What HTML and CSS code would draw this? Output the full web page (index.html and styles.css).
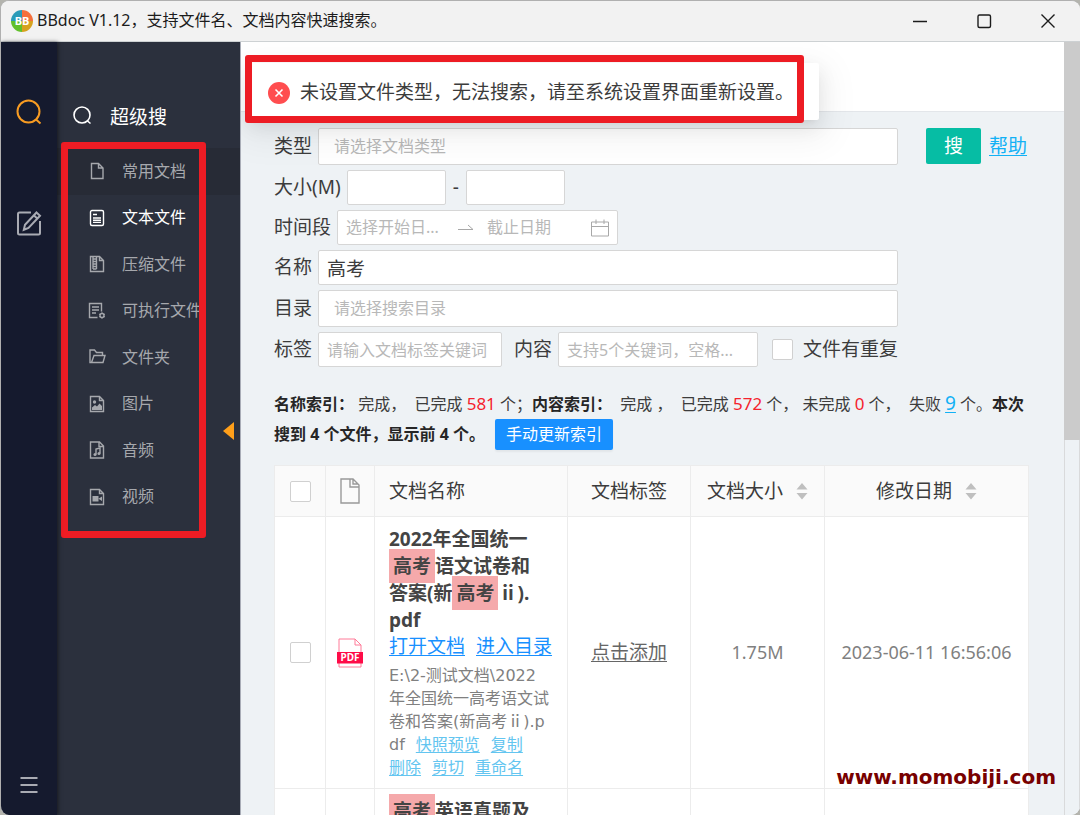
FILE: index.html
```html
<!DOCTYPE html>
<html lang="zh-CN">
<head>
<meta charset="utf-8">
<meta name="viewport" content="width=device-width, initial-scale=1">
<title>BBdoc V1.12</title>
<link rel="stylesheet" href="styles.css">
</head>
<body>
<div class="window">
  <header class="titlebar">
    <svg class="logo" viewBox="0 0 22 22" aria-hidden="true">
      <path d="M11 11V0A11 11 0 0 0 0 11z" fill="#2a9bb8"/>
      <path d="M11 11h11A11 11 0 0 0 11 0z" fill="#f56f3c"/>
      <path d="M11 11v11a11 11 0 0 0 11-11z" fill="#d6a21e"/>
      <path d="M11 11H0a11 11 0 0 0 11 11z" fill="#62c02c"/>
      <text class="logo-text" x="11" y="15" text-anchor="middle">BB</text>
    </svg>
    <h1 class="title">BBdoc V1.12，支持文件名、文档内容快速搜索。</h1>
    <div class="win-controls">
      <button class="win-btn" aria-label="最小化"><svg viewBox="0 0 16 16"><path d="M1 8.500h14"/></svg></button>
      <button class="win-btn" aria-label="最大化"><svg viewBox="0 0 16 16"><rect x="2" y="2" width="12.500" height="12.500" rx="1.500"/></svg></button>
      <button class="win-btn" aria-label="关闭"><svg viewBox="0 0 16 16"><path d="M1.500 1.500l13 13M14.500 1.500l-13 13"/></svg></button>
    </div>
  </header>

  <div class="app">
    <nav class="rail" aria-label="主导航">
      <button class="rail-btn rail-active" aria-label="搜索"><svg viewBox="0 0 26 26"><circle cx="12.500" cy="12.500" r="11"/><path d="M20 20.500l4.500 4"/></svg></button>
      <button class="rail-btn" aria-label="编辑"><svg viewBox="0 0 26 26"><path d="M15 2.500H3.500q-1.500 0-1.500 1.500v19q0 1.500 1.500 1.500h19q1.500 0 1.500-1.500V11"/><path d="M20.500 2.500l3.500 3.200L12.500 18l-4.700 1.800L9 14.800zM18 5.500l3.300 3"/></svg></button>
      <button class="rail-btn rail-menu" aria-label="菜单"><svg viewBox="0 0 26 26"><path d="M4.500 6h17M4.500 13h17M4.500 20h17"/></svg></button>
    </nav>

    <aside class="side">
      <div class="side-head">
        <svg viewBox="0 0 20 20" aria-hidden="true"><circle cx="10" cy="9" r="8"/><path d="M15.500 15l3 2.500"/></svg>
        <h2 class="side-title">超级搜</h2>
      </div>
      <ul class="menu">
        <li class="menu-item menu-hover"><svg viewBox="0 0 18 18"><path d="M3.500 1.500h7l4.500 4.500v10.500h-11.500zM10.500 1.500V6H15"/></svg>常用文档</li>
        <li class="menu-item menu-current"><svg viewBox="0 0 18 18"><rect x="2.500" y="1.500" width="13" height="15" rx="1.500"/><path d="M5 5.500h4M5 9h8M5 11.200h8M5 13.400h8"/></svg>文本文件</li>
        <li class="menu-item"><svg viewBox="0 0 18 18"><path d="M2.500 1.500h9l4 4v11h-13zM11.500 1.500v4h4"/><path d="M5 2v12M8.500 2v12M5 4h3.500M5 6.500h3.500M5 9h3.500M5 11.500h3.500M5 14h3.500"/></svg>压缩文件</li>
        <li class="menu-item"><svg viewBox="0 0 18 18"><path d="M9.500 15.500h-8v-14h12v8M4 5h7M4 8h7M4 11h4"/><circle cx="14" cy="13.500" r="2"/><path d="M14 10.500v1M14 15.500v1M11.300 12l.9.500M15.800 14.500l.9.500M11.300 15l.9-.5M15.800 12.500l.9-.5"/></svg>可执行文件</li>
        <li class="menu-item"><svg viewBox="0 0 18 18"><path d="M3.500 14.500h-1.500v-12.500h4.500l2 2.500h6v3M3.500 14.500l2.500-7h11l-2 7z"/></svg>文件夹</li>
        <li class="menu-item"><svg viewBox="0 0 18 18"><path d="M2.500 1.500h9l4 4v11h-13zM11.500 1.500v4h4"/><circle class="solid" cx="6.500" cy="7" r="1.700"/><path class="solid" d="M4 15v-2.500l3-2.500 2 1.500 2.500-3 2.500 2.500v4z"/></svg>图片</li>
        <li class="menu-item"><svg viewBox="0 0 18 18"><path d="M2.500 1h9l4 4v12h-13zM11 1v4.500h4.500"/><path d="M8 13.500v-5.500l4-1v5.500"/><circle class="solid" cx="7" cy="13.500" r="1.500"/><circle class="solid" cx="11" cy="12.500" r="1.500"/></svg>音频</li>
        <li class="menu-item"><svg viewBox="0 0 18 18"><path d="M2.500 1.500h9l4 4v11h-13zM11.500 1.500v4h4"/><path class="solid" d="M4.500 8h6v5.500h-6zM10.500 10.700l3.500-2.200v4.500z"/></svg>视频</li>
      </ul>
      <button class="collapse" aria-label="收起侧栏"></button>
      <div class="mark mark-menu"></div>
    </aside>

    <main class="main">
      <div class="topband"></div>
      <section class="content">
        <form class="search">
          <div class="fields">
            <div class="row">
              <label for="type">类型</label>
              <select id="type" class="box tall grow"><option>请选择文档类型</option></select>
            </div>
            <div class="row">
              <label for="min">大小(M)</label>
              <div class="range"><input id="min" class="box size"><span>-</span><input class="box size" aria-label="最大大小"></div>
            </div>
            <div class="row">
              <label for="start">时间段</label>
              <div class="box dates">
                <input id="start" class="bare" placeholder="选择开始日...">
                <svg class="arrow" viewBox="0 0 18 16"><path d="M1 9.500h15l-5-4.500"/></svg>
                <input class="bare" placeholder="截止日期" aria-label="截止日期">
                <svg class="calendar" viewBox="0 0 20 20"><path d="M1.500 4h17v14h-17zM1.500 8.500h17M6 1.500v4.500M14 1.500v4.500"/></svg>
              </div>
            </div>
            <div class="row">
              <label for="name">名称</label>
              <input id="name" class="box grow typed" value="高考">
            </div>
            <div class="row">
              <label for="dir">目录</label>
              <select id="dir" class="box tall grow"><option>请选择搜索目录</option></select>
            </div>
            <div class="row">
              <label for="tag">标签</label>
              <input id="tag" class="box tag" placeholder="请输入文档标签关键词">
              <label for="text" class="label-next">内容</label>
              <input id="text" class="box grow" placeholder="支持5个关键词，空格...">
              <input id="dup" class="check dup" type="checkbox">
              <label for="dup" class="label-dup">文件有重复</label>
            </div>
          </div>
          <div class="actions">
            <button type="button" class="go">搜</button>
            <a class="help" href="#">帮助</a>
          </div>
        </form>

        <div class="status">
          <b>名称索引：</b>&nbsp;完成，&nbsp; 已完成 <span class="num">581</span> 个；<b>内容索引：</b>&nbsp; 完成 ，&nbsp; 已完成 <span class="num">572</span> 个，&nbsp;未完成 <span class="num">0</span> 个，&nbsp; 失败 <a class="failed" href="#">9</a> 个。<b>本次<br>搜到 4 个文件，显示前 4 个。</b>
          <button type="button" class="update">手动更新索引</button>
        </div>

        <table class="results">
          <colgroup><col class="c-check"><col class="c-icon"><col class="c-name"><col class="c-tag"><col class="c-size"><col></colgroup>
          <thead>
            <tr>
              <th><input class="check" type="checkbox" aria-label="全选"></th>
              <th><svg class="doc" viewBox="0 0 20 26"><path d="M1 1h12l6 6v18H1zM10 1v8h9M13 1v5h5"/></svg></th>
              <th class="left">文档名称</th>
              <th>文档标签</th>
              <th><span class="sortable">文档大小<svg class="sort" viewBox="0 0 12 18"><path d="M6 1l5.500 6.500H.5zM6 17.500L.5 11h11z"/></svg></span></th>
              <th><span class="sortable">修改日期<svg class="sort" viewBox="0 0 12 18"><path d="M6 1l5.500 6.500H.5zM6 17.500L.5 11h11z"/></svg></span></th>
            </tr>
          </thead>
          <tbody>
            <tr>
              <td><input class="check" type="checkbox" aria-label="选择文档"></td>
              <td><svg class="pdf" viewBox="0 0 26 30"><path class="pdf-page" d="M2 14V1h16l6 6v7M18 1v6h6M2 25v4h22v-4"/><path d="M0 14h26v11.500H0z" fill="#ff0b47"/><text class="pdf-text" x="13" y="23" text-anchor="middle">PDF</text></svg></td>
              <td class="left">
                <div class="doc-title">2022年全国统一<br><mark class="hit">高考</mark>语文试卷和<br>答案(新<mark class="hit">高考</mark>ⅱ).<br>pdf</div>
                <div class="open"><a href="#">打开文档</a><a href="#">进入目录</a></div>
                <div class="path">E:\2-测试文档\2022年全国统一高考语文试卷和答案(新高考<span class="wide">ⅱ</span>).pdf<a href="#">快照预览</a><a href="#">复制</a><br><a class="first" href="#">删除</a><a href="#">剪切</a><a href="#">重命名</a></div>
              </td>
              <td><a class="add" href="#">点击添加</a></td>
              <td>1.75M</td>
              <td>2023-06-11 16:56:06</td>
            </tr>
            <tr class="tall-row">
              <td><input class="check" type="checkbox" aria-label="选择文档"></td>
              <td></td>
              <td class="left top"><div class="doc-title"><mark class="hit">高考</mark>英语真题及</div></td>
              <td></td><td></td><td></td>
            </tr>
          </tbody>
        </table>
      </section>

      <div class="toast" role="alert">
        <svg viewBox="0 0 22 22" aria-hidden="true"><circle cx="11" cy="11" r="11" fill="#ff4d4f"/><path d="M7.500 7.500l7 7M14.500 7.500l-7 7" stroke="#fff" stroke-width="1.600"/></svg>
        未设置文件类型，无法搜索，请至系统设置界面重新设置。
      </div>
      <div class="mark mark-toast"></div>
    </main>
    <div class="scrollbar"><div class="thumb"></div></div>
  </div>
  <div class="watermark">www.momobiji.com</div>
</div>
</body>
</html>
```
FILE: styles.css
```css
* { box-sizing: border-box; }

body {
  margin: 0;
  background: #b4b4ae;
  color: #3c3c3c;
  font: 19px/27px "Noto Sans", "Noto Sans CJK SC", sans-serif;
}

button, input, select { font: inherit; color: inherit; margin: 0; }
button { border: 0; padding: 0; background: none; }
svg { display: block; fill: none; stroke: currentColor; }

.window {
  position: relative;
  display: flex;
  flex-direction: column;
  height: 100vh;
  overflow: hidden;
  border: 1px solid #b0b0b0;
  border-bottom: 0;
  border-right: 0;
  border-radius: 9px;
  background: #eef2f5;
}

.titlebar {
  display: flex;
  align-items: center;
  flex: none;
  height: 41px;
  padding: 0 0 1px 10px;
  background: #f2f2f2;
  border-bottom: 1px solid #cdd1d3;
  color: #1c1c1c;
}
.logo { width: 22px; height: 22px; margin-right: 4px; stroke: none; }
.logo-text { font: bold 11px "Noto Sans", sans-serif; fill: #fff; }
.title { margin: 0; font-size: 16px; font-weight: 400; }
.win-controls { display: flex; margin-left: auto; }
.win-btn { display: grid; place-items: center; width: 64px; height: 38px; }
.win-btn svg { width: 16px; height: 16px; stroke-width: 1.4; }

.app { display: flex; flex: 1; min-height: 0; }

.rail {
  z-index: 1;
  display: flex;
  flex-direction: column;
  align-items: center;
  flex: none;
  width: 56px;
  padding: 57px 0 17px;
  background: #151a2e;
  box-shadow: 1px 0 4px rgba(0, 0, 0, 0.5);
  color: #a9abb3;
}
.rail-btn { width: 26px; height: 26px; margin-bottom: 85px; }
.rail-btn svg { stroke-width: 2; }
.rail-active { color: #f79b22; }
.rail-menu { margin: auto 0 0; }

.side {
  position: relative;
  flex: none;
  width: 183px;
  padding-top: 53px;
  background: #2b303d;
}
.side-head {
  display: flex;
  align-items: center;
  gap: 18px;
  height: 53px;
  padding: 0 0 12px 15px;
  color: #fff;
}
.side-head svg { width: 20px; height: 20px; stroke-width: 1.6; }
.side-title { margin: 3px 0 0; font-size: 19px; font-weight: 400; }
.menu {
  display: grid;
  grid-auto-rows: 1fr;
  min-height: 372px;
  margin: 0;
  padding: 0;
  list-style: none;
  font-size: 16px;
  color: #a6a8ad;
}
.menu-item { display: flex; align-items: center; gap: 16px; padding-left: 31px; white-space: nowrap; }
.menu-item svg { width: 18px; height: 18px; stroke-width: 1.4; }
.menu-item .solid { fill: currentColor; stroke: none; }
.menu-hover { background: #272b36; }
.menu-current { color: #fff; }
.collapse {
  position: absolute;
  right: 6px;
  top: 380px;
  width: 11px;
  height: 18px;
  background: #ff9f1a;
  clip-path: polygon(100% 0, 100% 100%, 0 50%);
}

.mark { position: absolute; border: 7px solid #ed1c24; border-radius: 3px; pointer-events: none; }
.mark-menu { left: 4px; top: 100px; width: 145px; height: 396px; }
.mark-toast { left: 4px; top: 13px; width: 559px; height: 68px; }

.main { position: relative; flex: 1; min-width: 0; overflow: hidden; border-left: 1px solid #a9adb7; }
.topband { height: 70px; background: #fff; border-bottom: 1px solid #e3e6ea; }
.content { padding: 16px 35px 0 33px; }

.search { display: grid; grid-template-columns: minmax(0, 1fr) 103px; gap: 28px; }
.fields { display: grid; grid-template-columns: minmax(0, 1fr); gap: 5px; }
.row { display: flex; align-items: center; gap: 6px; white-space: nowrap; }
.box {
  min-width: 0;
  height: 35px;
  padding: 0 8px;
  border: 1px solid #d6d6d6;
  border-radius: 2px;
  outline: 0;
  background: #fff;
  font-size: 16px;
}
.tall { height: 37px; padding: 0 15px; appearance: none; color: #b8b8b8; }
.grow { flex: 1; }
.typed { font-size: 19px; }
::placeholder { color: #b8b8b8; opacity: 1; }
.range { display: flex; align-items: center; gap: 7px; }
.size { width: 99px; }
.dates { display: flex; align-items: center; width: 281px; color: #a8a8a8; }
.bare { width: 103px; padding: 0; border: 0; outline: 0; background: none; }
.arrow { flex: none; width: 18px; height: 16px; margin: 0 12px 0 8px; }
.calendar { flex: none; width: 20px; height: 20px; }
.tag { width: 184px; }
.label-next { margin-left: 6px; }
.check {
  display: block;
  flex: none;
  width: 21px;
  height: 21px;
  margin: 0 auto;
  border: 1px solid #d0d0d0;
  border-radius: 2px;
  background: #fff;
  appearance: none;
}
.dup { margin: 0 4px 0 8px; }

.actions { display: flex; align-items: center; align-self: start; gap: 8px; height: 36px; white-space: nowrap; }
.go { flex: none; width: 55px; height: 36px; border-radius: 2px; background: #06bda4; color: #fff; }
a { text-underline-offset: 2px; }
.help, .failed { color: #12b1f5; }

.status { margin-top: 22px; font-size: 16px; line-height: 29px; }
.status b { color: #262626; }
.num { color: #f5222d; font-size: 17px; }
.failed { font-size: 19px; }
.update {
  width: 118px;
  height: 31px;
  margin-left: 6px;
  border-radius: 2px;
  background: #1890ff;
  box-shadow: 0 2px 2px rgba(0, 0, 0, 0.05);
  color: #fff;
  line-height: 29px;
}

.results {
  width: 100%;
  margin-top: 15px;
  border-collapse: collapse;
  table-layout: fixed;
  background: #fff;
}
.c-check { width: 51px; }
.c-icon { width: 49px; }
.c-name { width: 193px; }
.c-tag { width: 123px; }
.c-size { width: 134px; }
.results th { height: 51px; padding: 0; background: #fafafa; font-weight: 400; }
.results th, .results td { border: 1px solid #ececec; }
.results td { padding: 9px 0; text-align: center; color: #808080; font-size: 18px; }
.results .left { padding-left: 14px; padding-right: 10px; text-align: left; }
.results .top { vertical-align: top; }
.tall-row { height: 270px; }
.doc { width: 20px; height: 26px; margin: 0 auto; color: #999; stroke-width: 1.4; }
.sortable { display: inline-flex; align-items: center; gap: 13px; }
.sort { width: 12px; height: 18px; fill: #bfbfbf; stroke: none; }
.pdf { width: 26px; height: 30px; margin: 0 auto; stroke: none; }
.pdf-page { stroke: #ff7b98; }
.pdf-text { font: bold 10px "Noto Sans", sans-serif; fill: #fff; }

.doc-title { color: #444; font-size: 19px; font-weight: 700; line-height: 27px; white-space: nowrap; }
.hit { padding: 4px; background: #f5a9ab; color: inherit; }
.open { display: flex; gap: 11px; line-height: 24px; font-size: 19px; }
.open a { color: #1890ff; }
.path {
  padding: 6px 6px 0 0;
  font: 16px/23px "DejaVu Sans", "Noto Sans CJK SC", sans-serif;
  word-break: break-all;
}
.wide { font-family: "Noto Sans CJK SC", sans-serif; line-height: 1; }
.path a { margin-left: 11px; color: #63c5f0; white-space: nowrap; }
.path .first { margin-left: 0; }
.add { color: #666; font-size: 19px; }

.toast {
  position: absolute;
  left: 7px;
  top: 21px;
  display: flex;
  align-items: center;
  gap: 10px;
  height: 57px;
  padding: 2px 25px 0 20px;
  border-radius: 2px;
  background: #fff;
  box-shadow: 0 4px 7px -5px rgba(0, 0, 0, 0.12), 0 7px 19px rgba(0, 0, 0, 0.08), 0 11px 34px 10px rgba(0, 0, 0, 0.05);
  white-space: nowrap;
}
.toast svg { width: 22px; height: 22px; stroke: none; }

.scrollbar { flex: none; width: 16px; border: solid #d9dadb; border-width: 0 1px; background: #eef2f5; }
.thumb { height: 398px; margin: 0 -1px; background: #cbcbcb; }

.watermark {
  position: absolute;
  right: 24px;
  bottom: 24px;
  color: #780000;
  font: bold 20px/28px "DejaVu Sans", sans-serif;
}
```
